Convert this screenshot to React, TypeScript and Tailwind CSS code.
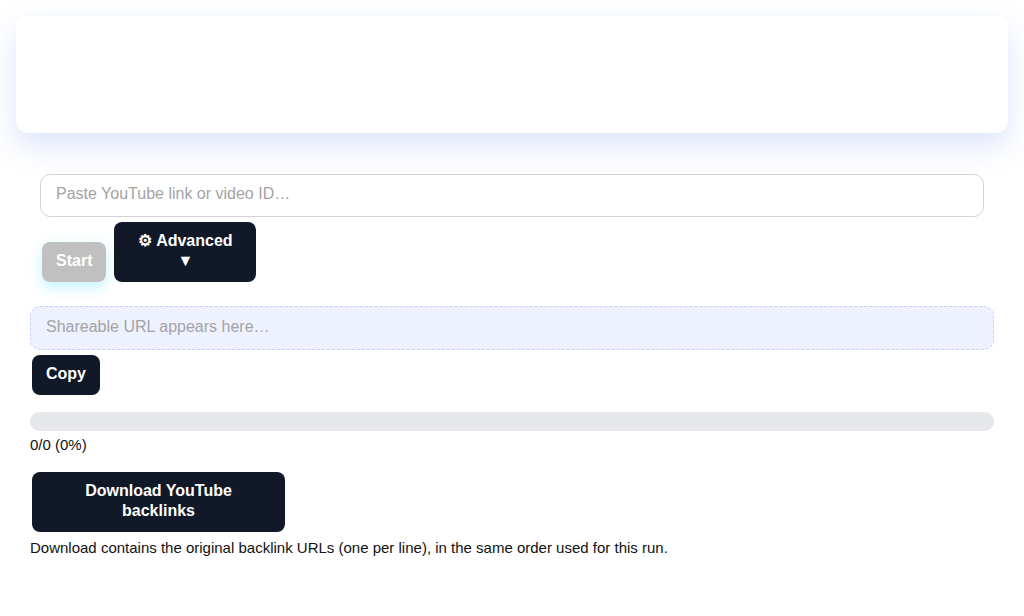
export default function App() {
  return (
    <div className="min-h-screen bg-white text-[#111] font-['Liberation_Sans',Arial,sans-serif]">
      <div className="p-4">
        <div className="h-[117px] rounded-xl bg-white shadow-[0_12px_30px_rgba(79,120,230,0.2)]" />
      </div>

      <div className="px-[30px] pt-[25px]">
        <div className="px-[10px]">
          <input
            type="text"
            placeholder="Paste YouTube link or video ID…"
            className="block h-[43px] w-full rounded-[10px] border border-[#d4d4d8] bg-white px-[15px] pb-[3px] text-base outline-none placeholder:text-[#a3a3a3]"
          />
        </div>

        <div className="mt-[5px] flex items-end gap-2 px-[12px]">
          <button className="h-10 rounded-lg bg-[#c0c0c0] px-[14px] pb-[2px] text-base font-bold leading-5 text-white shadow-[0_5px_14px_rgba(56,220,255,0.3)]">
            Start
          </button>
          <button className="w-[142px] rounded-lg bg-[#111827] px-[14px] pt-[9px] pb-[11px] text-base font-bold leading-5 text-white">
            ⚙ Advanced ▼
          </button>
        </div>

        <input
          type="text"
          placeholder="Shareable URL appears here…"
          className="mt-6 block h-[44px] w-full rounded-[10px] border border-dashed border-[#c7d2fe] bg-[#eef2ff] px-[15px] pb-[2px] text-base outline-none placeholder:text-[#a3a3a3]"
        />

        <button className="mx-[2px] mt-[5px] h-10 rounded-lg bg-[#111827] px-[14px] pb-[2px] text-base font-bold leading-5 text-white">
          Copy
        </button>

        <div className="mt-[17px] h-[19px] w-full rounded-full bg-[#e5e7eb]" />
        <div className="mt-[4px] text-[15px] leading-5">0/0 (0%)</div>

        <button className="mx-[2px] mt-[17px] w-[253px] rounded-lg bg-[#111827] px-[24px] pt-[9px] pb-[11px] text-base font-bold leading-5 text-white">
          Download YouTube backlinks
        </button>
        <p className="mt-[6px] text-[15px] leading-5">
          Download contains the original backlink URLs (one per line), in the same order used for this run.
        </p>
      </div>
    </div>
  );
}
